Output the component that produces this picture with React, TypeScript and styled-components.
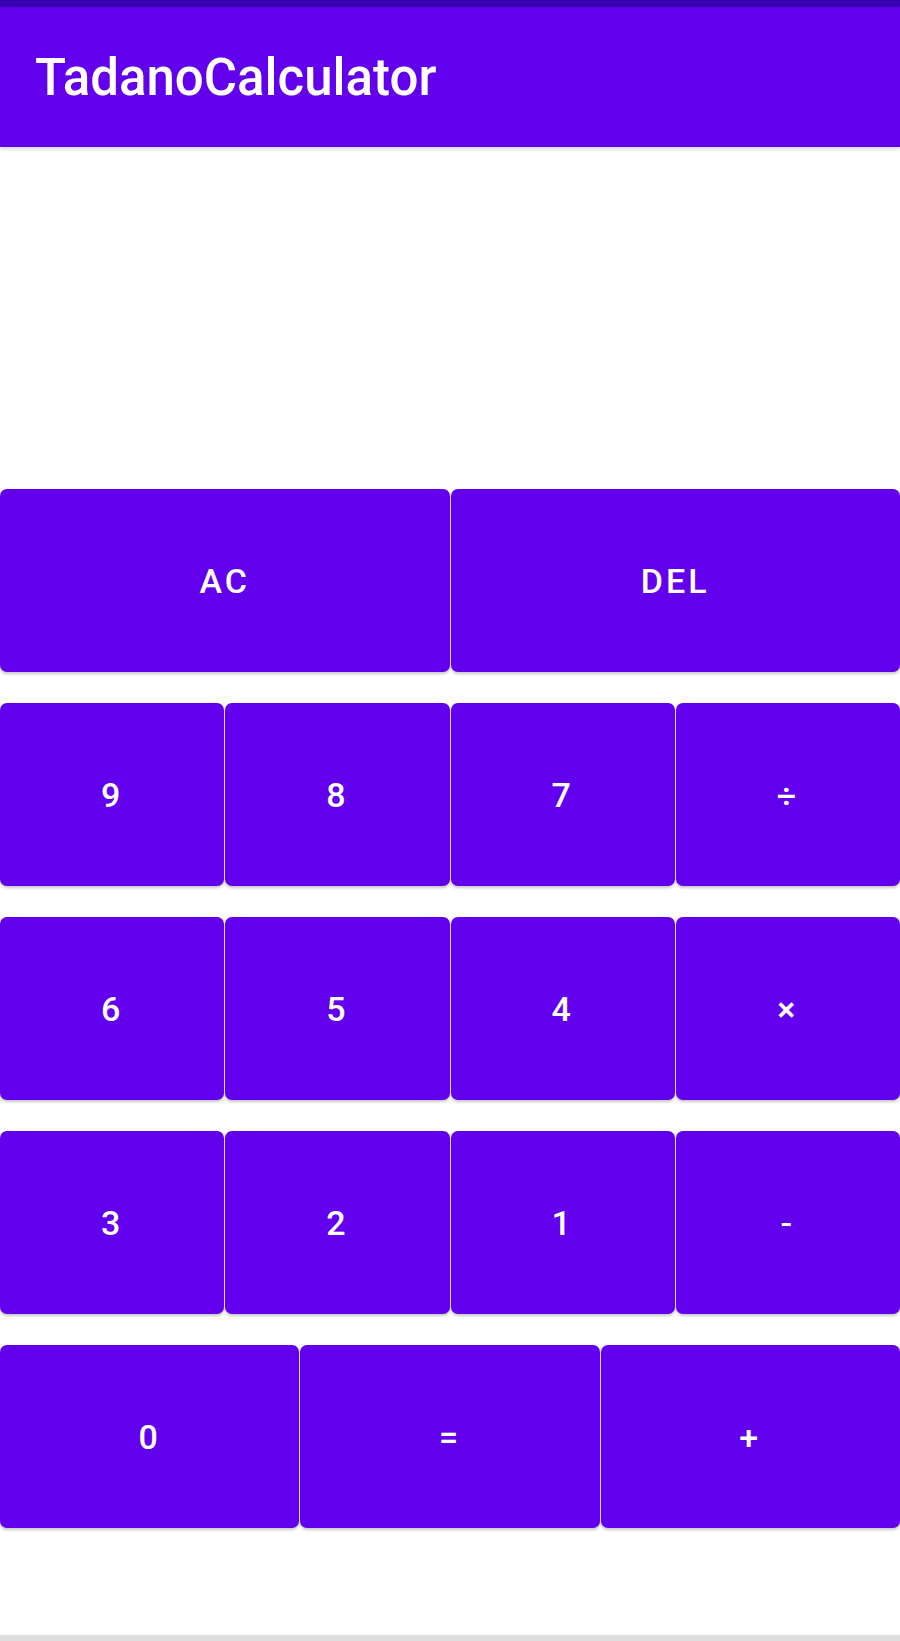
import React from 'react';
import styled, { createGlobalStyle } from 'styled-components';

const GlobalStyle = createGlobalStyle`
  html, body {
    margin: 0;
    padding: 0;
    background: #ffffff;
  }
  * {
    box-sizing: border-box;
  }
`;

const rows: string[][] = [
  ['AC', 'DEL'],
  ['9', '8', '7', '÷'],
  ['6', '5', '4', '×'],
  ['3', '2', '1', '-'],
  ['0', '=', '+'],
];

const App: React.FC = () => {
  return (
    <Screen>
      <GlobalStyle />
      <StatusBar />
      <AppBar>
        <Title>TadanoCalculator</Title>
      </AppBar>
      <Display />
      <Keypad>
        {rows.map((row, i) => (
          <KeyRow key={i} cols={row.length}>
            {row.map((label) => (
              <Key key={label}>{label}</Key>
            ))}
          </KeyRow>
        ))}
      </Keypad>
      <Spacer />
      <NavEdge />
    </Screen>
  );
};

const Screen = styled.div`
  width: 900px;
  height: 1641px;
  display: flex;
  flex-direction: column;
  font-family: Roboto, 'Noto Sans', sans-serif;
  overflow: hidden;
`;

const StatusBar = styled.div`
  height: 7px;
  background: #3700b3;
`;

const AppBar = styled.header`
  height: 140px;
  background: #6200ee;
  display: flex;
  align-items: center;
  padding-left: 35px;
  box-shadow: 0 2px 4px rgba(0, 0, 0, 0.18);
  position: relative;
  z-index: 1;
`;

const Title = styled.h1`
  margin: 0;
  color: #ffffff;
  font-size: 51px;
  font-weight: 500;
  letter-spacing: 0;
`;

const Display = styled.div`
  height: 342px;
`;

const Keypad = styled.div`
  display: flex;
  flex-direction: column;
  gap: 31px;
`;

const KeyRow = styled.div<{ cols: number }>`
  display: grid;
  grid-template-columns: repeat(${(p) => p.cols}, 1fr);
  gap: 1px;
  height: 183px;
`;

const Key = styled.button`
  border: none;
  border-radius: 7px;
  background: #6200ee;
  color: #ffffff;
  font-family: Roboto, 'Noto Sans', sans-serif;
  font-size: 34px;
  font-weight: 500;
  letter-spacing: 0.09em;
  padding: 0;
  box-shadow: 0 2px 3px rgba(0, 0, 0, 0.22);
  cursor: pointer;
`;

const Spacer = styled.div`
  flex: 1;
`;

const NavEdge = styled.div`
  height: 6px;
  background: #dedede;
`;

export default App;
